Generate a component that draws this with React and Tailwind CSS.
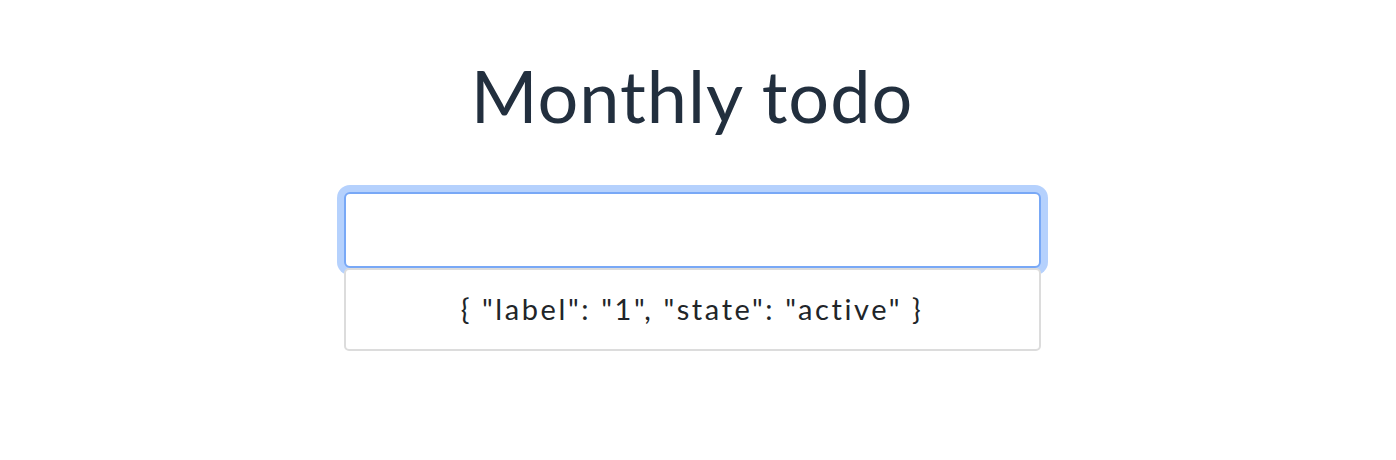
import React, { useState } from 'react';

export default function App() {
  const [value, setValue] = useState('');
  const items = [{ label: '1', state: 'active' }];

  return (
    <div className="min-h-[460px] bg-white font-['Lato','Noto_Sans',sans-serif]">
      <div className="mx-auto w-[697px] -translate-x-[6px] pt-[52px]">
        <h1 className="text-center text-[72px] leading-[1.2] font-normal tracking-[1px] text-[#222f3e]">
          Monthly todo
        </h1>

        <div className="mt-[54px]">
          <input
            type="text"
            value={value}
            onChange={(e) => setValue(e.target.value)}
            className="block h-[76px] w-full rounded-[6px] border-2 border-[#78a8f6] bg-white px-4 text-[28px] outline-none ring-[7px] ring-[#b5d1fd]"
          />
          <ul className="relative z-10">
            {items.map((item, i) => (
              <li
                key={i}
                className="flex h-[83px] items-center justify-center rounded-[5px] border-2 border-[#dcdcdc] bg-white pb-[2px] text-[29px] tracking-[2.6px] text-[#212529]"
              >
                {'{ "label": "' + item.label + '", "state": "' + item.state + '" }'}
              </li>
            ))}
          </ul>
        </div>
      </div>
    </div>
  );
}
